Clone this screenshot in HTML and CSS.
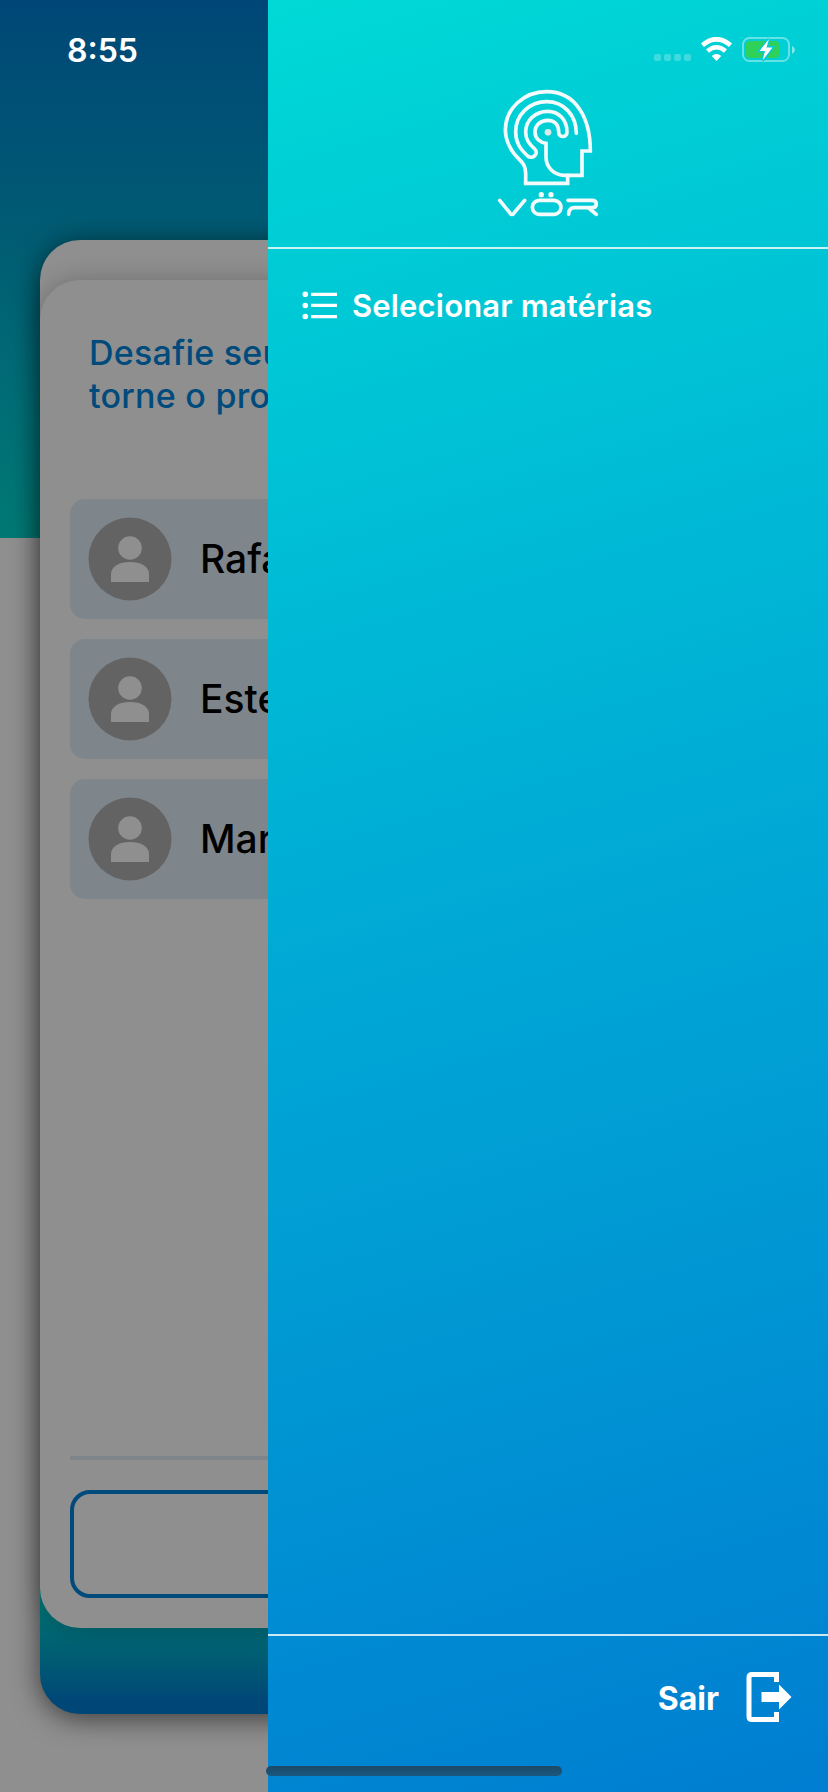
FILE: index.html
```
<!DOCTYPE html>
<html lang="pt-BR">
<head>
<meta charset="utf-8">
<meta name="viewport" content="width=device-width">
<title>VÖR</title>
<link rel="stylesheet" href="styles.css">
</head>
<body>
<svg class="defs" width="0" height="0">
  <symbol id="person" viewBox="0 0 84 84">
    <circle cx="42" cy="42" r="41.5" fill="#636363"/>
    <circle cx="42" cy="31" r="11.8" fill="#8f8f8f"/>
    <path d="M23 65V57C23 49.500 31 45 42 45S61 49.500 61 57V65Z" fill="#8f8f8f"/>
  </symbol>
</svg>
<div class="screen">
  <main class="page">
    <div class="stack">
      <section class="card">
        <h1 class="title"><span>Desafie seu</span><span>torne o pro</span></h1>
        <ul class="people">
          <li class="person"><svg class="avatar"><use href="#person"/></svg><span class="name">Rafa</span></li>
          <li class="person"><svg class="avatar"><use href="#person"/></svg><span class="name">Este</span></li>
          <li class="person"><svg class="avatar"><use href="#person"/></svg><span class="name">Mar</span></li>
        </ul>
        <div class="rule"></div>
        <div class="button"></div>
      </section>
    </div>
  </main>
  <aside class="drawer">
    <header class="brand">
      <svg class="logo" width="140" height="150" viewBox="0 0 420 450" fill="none" stroke="#f3fbfc" stroke-width="11" stroke-linecap="round" stroke-linejoin="miter">
        <path d="M137 325V295C137 260 115 257 97 229C83 207 76 190 76 166C76 100 132 50 200 50C285 50 331 125 331 228H306V301H254C222 301 198 277 198 246V205C180 203 165 190 165 171C165 150 182 136 203 136C225 136 236 150 236 171C236 189 261 189 261 171C261 134 236 109 203 109C165 109 137 137 137 171C137 194 147 206 164 222C178 235 158 255 143 243C118 220 107 200 107 170C107 118 150 80 200 80C251 80 289 120 289 175"/>
        <path d="M137 325H263V302" stroke-linecap="square"/>
        <circle cx="204" cy="172" r="10" fill="#dce9eb" stroke="none"/>
        <g class="wordmark">
          <path d="M59 376L89 413Q96 424 103 413L134 376"/>
          <rect x="157" y="376" width="86" height="42" rx="21"/>
          <path d="M264 376H336Q349 376 349 387T336 398H284Q266 398 266 418M326 399L349 418"/>
          <circle cx="184" cy="359" r="8" fill="#f3fbfc" stroke="none"/>
          <circle cx="213" cy="359" r="8" fill="#f3fbfc" stroke="none"/>
        </g>
      </svg>
    </header>
    <nav class="menu">
      <a class="item">
        <svg width="36" height="30" viewBox="0 0 36 30" fill="#fff"><circle cx="3.300" cy="4.300" r="2.800"/><circle cx="3.300" cy="15.500" r="2.800"/><circle cx="3.300" cy="26.500" r="2.800"/><path d="M9 2.700h26v3.300H9zM9 13.800h26v3.300H9zM9 25h26v3.300H9z"/></svg>
        <span>Selecionar matérias</span>
      </a>
    </nav>
    <footer class="exit">
      <span>Sair</span>
      <svg width="46" height="52" viewBox="0 0 46 52"><path d="M30.500 11V3.500H6Q3 3.500 3 6.500V45.500Q3 48.500 6 48.500H30.500V41" fill="none" stroke="#fff" stroke-width="5"/><path d="M15.500 21H33V13.500L45.500 26L33 38.500V31H15.500Z" fill="#fff"/></svg>
    </footer>
  </aside>
  <div class="status">
    <span class="time">8:55</span>
    <svg class="indicators" width="142" height="28" viewBox="0 0 142 28">
      <g fill="#fff" fill-opacity=".24"><rect x="0" y="17" width="7" height="7" rx="2"/><rect x="10" y="17" width="7" height="7" rx="2"/><rect x="20" y="17" width="7" height="7" rx="2"/><rect x="30" y="17" width="7" height="7" rx="2"/></g>
      <g fill="none" stroke="#fff"><path d="M48.500 8.300Q62.500-3.700 76.500 8.300" stroke-width="4.800"/><path d="M53.500 14Q62.500 6.500 71.500 14" stroke-width="4.500"/></g>
      <path d="M57.700 19Q62.500 15 67.300 19L62.500 24Z" fill="#fff"/>
      <rect x="89" y="1" width="46" height="23" rx="6.500" fill="none" stroke="#fff" stroke-opacity=".4" stroke-width="2"/>
      <path d="M138 9q3 1.500 3 4t-3 4z" fill="#fff" fill-opacity=".5"/>
      <rect x="92" y="4" width="33" height="17" rx="3.500" fill="#30d158"/>
      <path d="M115 2L105.500 14H111L108.500 23.500L118.500 10.500H112.500Z" fill="#fff" stroke="#05cad6" stroke-width="3" paint-order="stroke"/>
    </svg>
  </div>
  <div class="home"></div>
</div>
</body>
</html>
```
FILE: styles.css
```
* { box-sizing: border-box; }
body { margin: 0; font-family: Inter, "Liberation Sans", sans-serif; }
.defs { position: absolute; }
.screen { position: relative; width: 828px; height: 1792px; overflow: hidden; background: #8f8f8f; }
.page { height: 1792px; padding: 240px 40px 78px; background: linear-gradient(#004777, #005c73 44%, #006e76 75%, #007874) top / 100% 538px no-repeat; }
.stack { height: 1474px; padding-top: 40px; border-radius: 40px; background: linear-gradient(#007874, #005c73 56%, #004777 90%) bottom / 100% 126px no-repeat #8f8f8f; box-shadow: 0 4px 28px rgba(0,0,0,.6); }
.card { height: 1348px; padding: 51px 30px 30px; display: flex; flex-direction: column; border-radius: 40px; background: #8f8f8f; box-shadow: 0 0 24px rgba(0,0,0,.22); }
.title { margin: 0 0 81px 19px; height: 87px; display: flex; flex-direction: column; font-size: 34px; font-weight: 500; line-height: 43px; letter-spacing: .25px; color: #004a7c; white-space: nowrap; }
.people { list-style: none; margin: 0; padding: 0; display: flex; flex-direction: column; gap: 20px; }
.person { height: 120px; padding-left: 18px; display: flex; align-items: center; gap: 28px; border-radius: 15px; background: #7e868c; }
.avatar { width: 84px; height: 84px; }
.name { font-size: 39px; font-weight: 500; line-height: 48px; color: #000; }
.rule { height: 4px; margin-top: auto; background: #7e868c; }
.button { height: 108px; margin-top: 30px; border: 4px solid #004a7c; border-radius: 20px; }
.drawer { position: absolute; inset: 0 0 0 268px; display: flex; flex-direction: column; background: linear-gradient(164deg, #00d9d6, #00a8d5 51%, #007cd1 102%); color: #fff; }
.brand { height: 249px; padding: 75px 0 0 212px; border-bottom: 2px solid rgba(255,255,255,.8); }
.logo { display: block; }
.menu { flex: 1; padding: 36px 34px; }
.item { display: flex; align-items: center; gap: 14px; height: 40px; font-weight: 600; font-size: 31px; letter-spacing: .17px; }
.exit { height: 158px; padding: 35px 36px 0 0; border-top: 2px solid rgba(255,255,255,.8); display: flex; justify-content: flex-end; align-items: flex-start; gap: 27px; font-weight: 700; font-size: 32px; line-height: 56px; }
.status { position: absolute; left: 67px; right: 34px; top: 36px; display: flex; justify-content: space-between; align-items: flex-start; color: #fff; }
.time { font-size: 32px; line-height: 29px; font-weight: 600; }
.indicators { margin: 1px -2px 0 0; }
.home { position: absolute; left: 266px; top: 1766px; width: 296px; height: 10px; border-radius: 5px; background: linear-gradient(#1c4a66, #1a5880); }
```
